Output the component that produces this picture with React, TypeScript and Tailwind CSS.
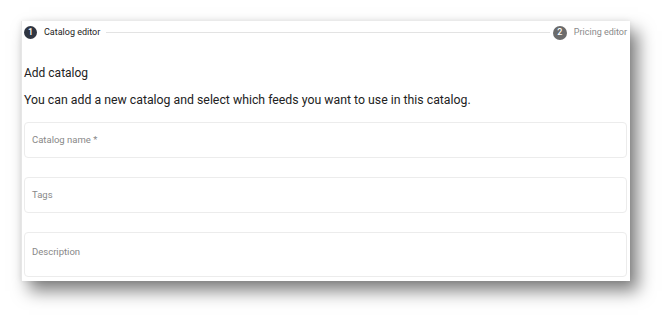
import React from "react";

export default function App() {
  return (
    <div className="w-[672px] h-[323px] bg-white pt-[21px] pl-[21px] font-['Roboto',sans-serif]">
      <div className="w-[609px] h-[260px] bg-white overflow-hidden border-l border-[#e6e6e6] shadow-[8px_10px_16px_rgba(0,0,0,0.5),0_0_6px_rgba(0,0,0,0.08)] pl-[2px] pr-[3px]">
        <div className="flex items-center h-[13px] mt-[5px]">
          <div className="w-[13px] h-[13px] rounded-full bg-[#2f3541] text-white text-[9px] font-medium flex items-center justify-center shrink-0">1</div>
          <span className="ml-[7px] text-[9px] text-[#222]">Catalog editor</span>
          <div className="flex-1 h-px bg-[#e3e3e3] ml-[6px] mr-[3px]"></div>
          <div className="w-[14px] h-[14px] rounded-full bg-[#6b6b6b] text-white text-[9px] font-medium flex items-center justify-center shrink-0">2</div>
          <span className="ml-[7px] text-[9px] text-[#8a8a8a]">Pricing editor</span>
        </div>
        <div className="mt-[26px] text-[12px] leading-[16px] text-[#222]">Add catalog</div>
        <div className="mt-[11px] text-[12.3px] leading-[16px] text-[#222]">You can add a new catalog and select which feeds you want to use in this catalog.</div>
        <div className="mt-[14px] flex flex-col gap-[19px]">
          <div className="h-[36px] border border-[#ececec] rounded-[4px] flex items-center px-[7px] text-[9.5px] text-[#888]">Catalog name *</div>
          <div className="h-[36px] border border-[#ececec] rounded-[4px] flex items-center px-[7px] text-[9.5px] text-[#888]">Tags</div>
          <div className="h-[45px] border border-[#ececec] rounded-[4px] px-[7px] pt-[12px] leading-[14px] text-[9.5px] text-[#888]">Description</div>
        </div>
      </div>
    </div>
  );
}
